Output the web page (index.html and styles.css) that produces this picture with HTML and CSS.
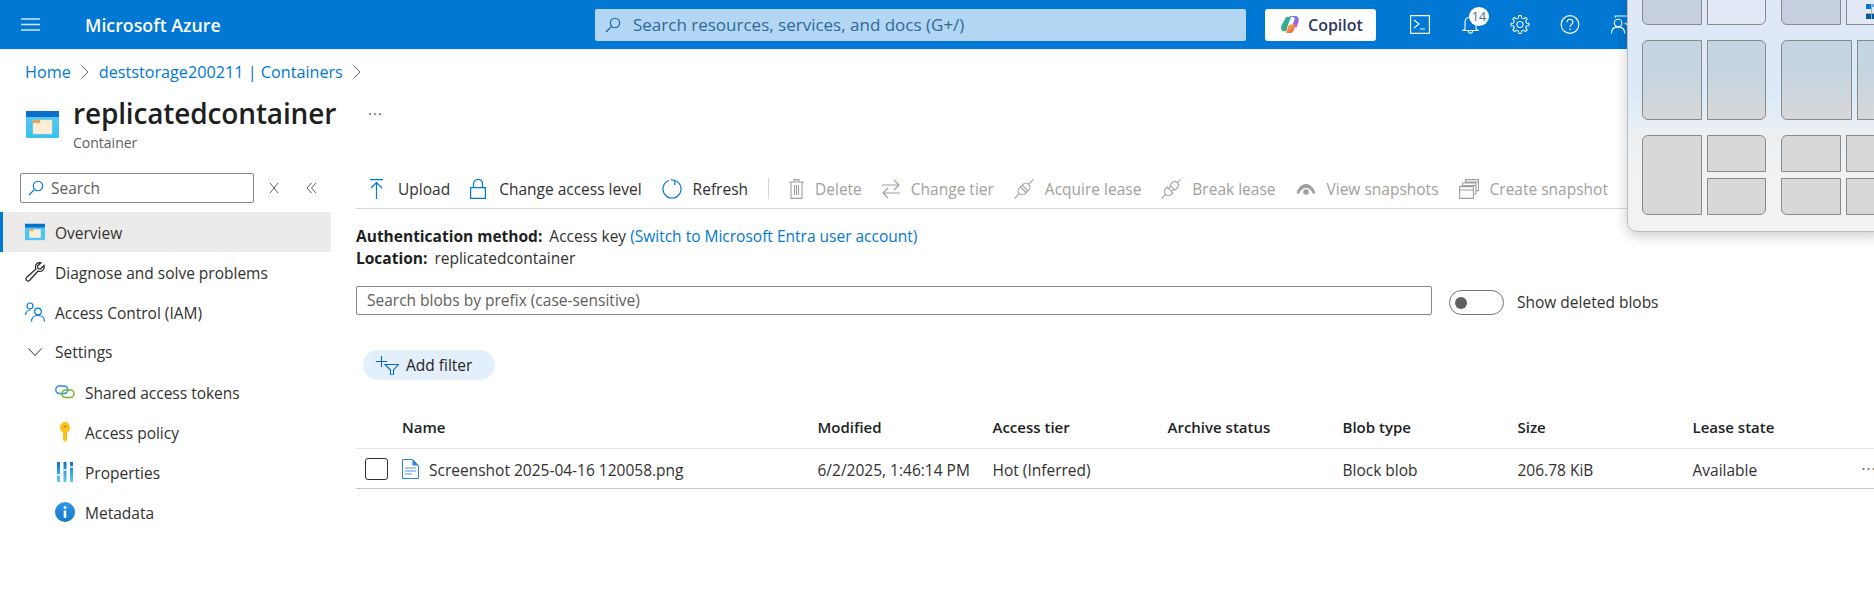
FILE: index.html
```html
<!DOCTYPE html>
<html lang="en">
<head>
<meta charset="utf-8">
<title>replicatedcontainer - Microsoft Azure</title>
<link rel="stylesheet" href="styles.css">
</head>
<body>
<header class="topbar">
  <svg class="hamburger" viewBox="0 0 19 13"><path d="M0 1h19M0 6.500h19M0 12h19" stroke="#cfe5f7" stroke-width="1.400" fill="none"/></svg>
  <div class="brand">Microsoft Azure</div>
  <div class="globalsearch">
    <svg class="ic16" viewBox="0 0 16 16"><circle cx="10" cy="6" r="4.700" fill="none" stroke="#1d5c92" stroke-width="1.100"/><path d="M6.600 9.400 1 15" stroke="#1d5c92" stroke-width="1.200"/></svg>
    <span>Search resources, services, and docs (G+/)</span>
  </div>
  <div class="copilot">
    <svg class="copilot-logo" viewBox="0 0 20 20"><defs><linearGradient id="cg1" x1="0" y1="0" x2="1" y2="1"><stop offset="0" stop-color="#1fb6c9"/><stop offset="1" stop-color="#4aa24f"/></linearGradient><linearGradient id="cg2" x1="0" y1="0" x2="1" y2="1"><stop offset="0" stop-color="#4a8cf0"/><stop offset="1" stop-color="#c74bd0"/></linearGradient><linearGradient id="cg3" x1="0" y1="0" x2="1" y2="1"><stop offset="0" stop-color="#f7b93c"/><stop offset="1" stop-color="#ef4f5c"/></linearGradient></defs><path d="M6 2h5L8 10 6 17H4C1 17 0 14 1 11z" fill="url(#cg1)"/><path d="M9 2c1-1 2-1 4-1h2c3 0 5 2 4 6l-2 6h-5l3-9c0-2-2-2-3-2z" fill="url(#cg2)"/><path d="M6 19l2-7c.500-1 1-2 3-2h5l-2 6c-1 2-2 3-4 3z" fill="url(#cg3)"/></svg>
    <span>Copilot</span>
  </div>
  <div class="topicons">
    <svg class="ti" viewBox="0 0 20 19"><path d="M.600.600h18.800v17.800H.600z" fill="none" stroke="#fff" stroke-width="1.100"/><path d="M4 5l5 4-5 4M10 14h5" fill="none" stroke="#fff" stroke-width="1.100"/></svg>
    <div class="bell">
      <svg class="bell-ic" viewBox="0 0 17 21"><path d="M3 15V8c0-3 2-5 5.500-5S14 5 14 8v7l2 1.500H1zM6.500 17c0 3 4 3 4 0" fill="none" stroke="#fff" stroke-width="1.100"/></svg>
      <span class="badge">14</span>
    </div>
    <svg class="ti" viewBox="0 0 20 20"><defs><path id="tooth" d="M-2.680-6.470-1.575-6.820-1.320-9.410 1.320-9.410 1.575-6.820 2.680-6.470" fill="none" stroke="#fff" stroke-width="1.100" stroke-linejoin="round"/></defs><g transform="translate(10 10)"><use href="#tooth"/><use href="#tooth" transform="rotate(45)"/><use href="#tooth" transform="rotate(90)"/><use href="#tooth" transform="rotate(135)"/><use href="#tooth" transform="rotate(180)"/><use href="#tooth" transform="rotate(225)"/><use href="#tooth" transform="rotate(270)"/><use href="#tooth" transform="rotate(315)"/><circle r="3.200" fill="none" stroke="#fff" stroke-width="1.100"/></g></svg>
    <svg class="ti" viewBox="0 0 20 20"><circle cx="10" cy="10" r="9.300" fill="none" stroke="#fff" stroke-width="1.200"/><path d="M7 7.500C7 5.500 8.500 4.500 10 4.500s3 1 3 3c0 2.500-3 2.500-3 5" fill="none" stroke="#fff" stroke-width="1.200"/><circle cx="10" cy="15" r=".900" fill="#fff"/></svg>
    <svg class="ti person" viewBox="0 0 20 20"><circle cx="8" cy="8.500" r="4" fill="none" stroke="#fff" stroke-width="1.200"/><path d="M1 19.500c0-5 3-7 7-7s7 2 7 7M5 3V1h14M15 8l2 2 2-2" fill="none" stroke="#fff" stroke-width="1.200"/></svg>
  </div>
</header>

<nav class="crumbs">
  <a>Home</a>
  <svg class="chev" viewBox="0 0 8 14"><path d="M1 1l6 6-6 6" fill="none" stroke="#605e5c"/></svg>
  <a>deststorage200211 | Containers</a>
  <svg class="chev" viewBox="0 0 8 14"><path d="M1 1l6 6-6 6" fill="none" stroke="#605e5c"/></svg>
</nav>

<section class="blade-head">
  <svg class="blade-icon" viewBox="0 0 33 27"><defs><linearGradient id="cb" x1="0" y1="0" x2="0" y2="1"><stop offset="0" stop-color="#5ec9f0"/><stop offset="1" stop-color="#35c2ee"/></linearGradient></defs><rect width="33" height="27" rx="1" fill="url(#cb)"/><rect width="33" height="6" fill="#0a6fcb"/><rect x="7" y="9" width="19" height="14" fill="#fbeed7" stroke="#e8d5b2" stroke-width=".500"/><rect x="7" y="9" width="7" height="3" fill="#f2a24a"/></svg>
  <div class="titles">
    <h1>replicatedcontainer</h1>
    <div class="subtitle">Container</div>
  </div>
  <div class="title-more">···</div>
</section>

<div class="blade-body">
  <aside class="side">
    <div class="side-tools">
      <div class="side-search">
        <svg class="ic16" viewBox="0 0 16 16"><circle cx="10" cy="6" r="4.700" fill="none" stroke="#0078d4" stroke-width="1.100"/><path d="M6.600 9.400 1 15" stroke="#0078d4" stroke-width="1.200"/></svg>
        <span>Search</span>
      </div>
      <svg class="tool-x" viewBox="0 0 10 12"><path d="M1 1l8 10M9 1 1 11" stroke="#605e5c" fill="none"/></svg>
      <svg class="tool-dbl" viewBox="0 0 11 12"><path d="M5.500 1 1 6l4.500 5M10 1 5.500 6l4.500 5" stroke="#605e5c" fill="none"/></svg>
    </div>
    <ul class="menu">
      <li class="row active">
        <svg class="mi" viewBox="0 0 33 27"><rect width="33" height="27" fill="#4cc6f0"/><rect width="33" height="6" fill="#0a6fcb"/><rect x="7" y="9" width="19" height="14" fill="#fbeed7"/><rect x="7" y="9" width="7" height="3" fill="#f2a24a"/></svg>
        <span>Overview</span>
      </li>
      <li class="row">
        <svg class="mi" viewBox="0 0 20 20"><path d="M19 3.500l-3.500 3.500-2.500-.500-.500-2.500L16 .800C13 0 10 2 10.500 5.500c.100.700.300 1.200.500 1.500L1.500 15.500c-1.500 2 1 4.500 3 3L13 9c3 1.500 7-1 6-5.500z" fill="none" stroke="#252423" stroke-width="1.200"/></svg>
        <span>Diagnose and solve problems</span>
      </li>
      <li class="row">
        <svg class="mi" viewBox="0 0 20 20"><circle cx="5" cy="4" r="3" fill="none" stroke="#0078d4" stroke-width="1.200"/><circle cx="13" cy="9.500" r="3.300" fill="none" stroke="#0078d4" stroke-width="1.200"/><path d="M.700 13c0-3 2-5 4.500-5M6.500 19.500c0-4 3-6 6.500-6s6.500 2 6.500 6" fill="none" stroke="#0078d4" stroke-width="1.200"/></svg>
        <span>Access Control (IAM)</span>
      </li>
      <li class="row settings">
        <svg class="mi-chev" viewBox="0 0 14 8"><path d="M.500.500 7 7.500 13.500.500" fill="none" stroke="#323130"/></svg>
        <span>Settings</span>
      </li>
      <li class="row sub">
        <svg class="mi" viewBox="0 0 20 14"><rect x=".800" y="1" width="12" height="7.500" rx="3.700" fill="none" stroke="#2f8fdc" stroke-width="1.500"/><rect x="7" y="5" width="12" height="7.500" rx="3.700" fill="none" stroke="#76b82a" stroke-width="1.500"/></svg>
        <span>Shared access tokens</span>
      </li>
      <li class="row sub">
        <svg class="mi" viewBox="0 0 20 20"><path d="M10 0c3 0 5 2.500 5 5.500S13 10 12 10.500V18l-2 2-2-2V10.500C7 10 5 8.500 5 5.500S7 0 10 0z" fill="#fcc419"/><path d="M8.500 4.500h3" stroke="#a87400" stroke-width="1.200"/><path d="M12 12h-1.500M12 15h-1.500" stroke="#e8a200"/></svg>
        <span>Access policy</span>
      </li>
      <li class="row sub">
        <svg class="mi" viewBox="0 0 20 20"><defs><linearGradient id="pg" x1="0" y1="0" x2="0" y2="1"><stop offset="0" stop-color="#0a6fcb"/><stop offset="1" stop-color="#5ed4f2"/></linearGradient></defs><path d="M2 0h3v20H2zM8.500 0h3v20h-3zM15 0h3v20h-3z" fill="url(#pg)"/><path d="M2 13h3M8.500 8h3M15 5h3" stroke="#fff" stroke-width="1.300"/></svg>
        <span>Properties</span>
      </li>
      <li class="row sub">
        <svg class="mi" viewBox="0 0 20 20"><defs><linearGradient id="ig" x1="0" y1="0" x2="0" y2="1"><stop offset="0" stop-color="#2d97e8"/><stop offset="1" stop-color="#1478c8"/></linearGradient></defs><circle cx="10" cy="10" r="10" fill="url(#ig)"/><circle cx="10" cy="5.500" r="1.500" fill="#fff"/><path d="M8.700 8.500h2.600v7.500H8.700z" fill="#fff"/></svg>
        <span>Metadata</span>
      </li>
    </ul>
  </aside>

  <main class="main">
    <div class="toolbar">
      <div class="tool"><svg class="ti-u" viewBox="0 0 13 20"><path d="M0 .600h13M6.500 20V4M1 9l5.500-5.500L12 9" fill="none" stroke="#0078d4" stroke-width="1.200"/></svg><span>Upload</span></div>
      <div class="tool"><svg class="ti-l" viewBox="0 0 16 20"><path d="M.600 8.600h14.800v10.800H.600zM3.500 8.500V5c0-6 9-6 9 0v3.500" fill="none" stroke="#0078d4" stroke-width="1.200"/></svg><span>Change access level</span></div>
      <div class="tool"><svg class="ti-i" viewBox="0 0 20 20"><path d="M7 1.500a9 9 0 1 0 6 0M12.800 1.500V6M13 1.500 8.800 .600" fill="none" stroke="#0078d4" stroke-width="1.200"/></svg><span>Refresh</span></div>
      <div class="tool-sep"></div>
      <div class="tool off"><svg class="ti-d" viewBox="0 0 15 20"><path d="M0 3h15M5 3V.600h5V3M2 3v16.400h11V3M5.500 6v10M7.500 6v10M9.500 6v10" fill="none" stroke="#a19f9d" stroke-width="1.100"/></svg><span>Delete</span></div>
      <div class="tool off"><svg class="ti-t" viewBox="0 0 18 20"><path d="M0 6h17M12 1l5 5-5 5M18 14H1M6 9l-5 5 5 5" fill="none" stroke="#a19f9d" stroke-width="1.100"/></svg><span>Change tier</span></div>
      <div class="tool off"><svg class="ti-i" viewBox="0 0 20 20"><g transform="rotate(45 10 10)" fill="none" stroke="#a19f9d" stroke-width="1.100"><rect x="6" y="3.500" width="8" height="13" rx="4"/><path d="M6 8.500h8M6 11h8M10 3.500V-3.500M10 16.500v7"/></g></svg><span>Acquire lease</span></div>
      <div class="tool off"><svg class="ti-i" viewBox="0 0 20 20"><g transform="rotate(45 10 10)" fill="none" stroke="#a19f9d" stroke-width="1.100"><path d="M6.500 4.500a3.500 3.500 0 0 1 7 0v3.500h-7zM6 11.500h8v2a4 4 0 0 1-8 0zM10 1V-3.500M10 17.500v6M8 8v3.500M12 8v3.500"/></g></svg><span>Break lease</span></div>
      <div class="tool off"><svg class="ti-v" viewBox="0 0 20 12"><path d="M.500 10C3 3 7 1 10 1s7 2 9.500 9l-2.500 1C15 6 12.500 5 10 5S5 6 3 11z" fill="#a19f9d"/><circle cx="10" cy="9" r="2.800" fill="#a19f9d"/></svg><span>View snapshots</span></div>
      <div class="tool off"><svg class="ti-i" viewBox="0 0 20 20"><path d="M.600 7.600h13.800v11.800H.600zM.600 11h13.800M3.500 7.500v-3.500h13.500v11h-2.500M3.500 6.500H17M6.500 4V.600h13v11h-2.500M6.500 3H19.500" fill="none" stroke="#a19f9d" stroke-width="1.100"/></svg><span>Create snapshot</span></div>
      <div class="tool"><svg class="ti-i" viewBox="0 0 20 20"><circle cx="8" cy="8" r="4" fill="none" stroke="#0078d4" stroke-width="1.200"/><path d="M1 19c0-5 3-7 7-7s7 2 7 7" fill="none" stroke="#0078d4" stroke-width="1.200"/></svg></div>
    </div>

    <div class="info">
      <div><b>Authentication method:</b> Access key <a>(Switch to Microsoft Entra user account)</a></div>
      <div><b>Location:</b> replicatedcontainer</div>
    </div>

    <div class="filter-row">
      <div class="prefix">Search blobs by prefix (case-sensitive)</div>
      <div class="toggle"><i></i></div>
      <span class="toggle-label">Show deleted blobs</span>
    </div>

    <div class="pill">
      <svg class="pill-ic" viewBox="0 0 23 19"><path d="M5.500 0v11M0 5.500h11" stroke="#0a63d8" stroke-width="1.100" fill="none"/><path d="M9 8.500h13.500l-5 5.500v5h-3v-5z" fill="none" stroke="#0a63d8" stroke-width="1.100"/></svg>
      <span>Add filter</span>
    </div>

    <div class="table">
      <div class="thead">
        <div class="cell">Name</div>
        <div class="cell">Modified</div>
        <div class="cell">Access tier</div>
        <div class="cell">Archive status</div>
        <div class="cell">Blob type</div>
        <div class="cell">Size</div>
        <div class="cell">Lease state</div>
      </div>
      <div class="tbody">
        <div class="check"></div>
        <div class="cell namecell">
          <svg class="file" viewBox="0 0 17 20"><path d="M.500.500h10l6 6v13H.500z" fill="#fff" stroke="#2c83dc"/><path d="M10.500.500v6h6z" fill="#2c83dc"/><path d="M3 9h11M3 12h11M3 15h7" stroke="#8ab9ec" stroke-width="1.300"/></svg>
          <span>Screenshot 2025-04-16 120058.png</span>
        </div>
        <div class="cell">6/2/2025, 1:46:14 PM</div>
        <div class="cell">Hot (Inferred)</div>
        <div class="cell"></div>
        <div class="cell">Block blob</div>
        <div class="cell">206.78 KiB</div>
        <div class="cell">Available</div>
        <div class="row-more">···</div>
      </div>
    </div>
  </main>
</div>

<div class="snap">
  <div class="snap-group">
    <div class="snap-row r-top"><div class="s w60 bl dark"></div><div class="s w59 br light"></div></div>
    <div class="snap-row r-mid"><div class="s w60 tl bl mid"></div><div class="s w59 tr br mid"></div></div>
    <div class="snap-row r-low"><div class="s w60 tl bl low"></div><div class="split w59"><div class="s tr low"></div><div class="s br low"></div></div></div>
  </div>
  <div class="snap-group">
    <div class="snap-row r-top"><div class="s w60 bl dark"></div><div class="s w60 light"><svg class="mini" viewBox="0 0 11 15"><rect width="6" height="5" fill="#0078d4"/><rect x="6" width="5" height="3" fill="#5aa9ef"/><rect y="10" width="5" height="5" fill="#005a9e"/><rect x="6" y="10" width="5" height="5" fill="#005a9e"/><path d="M0 9.500h11M5.500 0v15" stroke="#aaa"/></svg></div></div>
    <div class="snap-row r-mid"><div class="s w71 tl bl mid"></div><div class="s w60 mid"></div></div>
    <div class="snap-row r-low"><div class="split w60"><div class="s tl low"></div><div class="s bl low"></div></div><div class="split w60"><div class="s low"></div><div class="s low"></div></div></div>
  </div>
</div>
</body>
</html>
```

FILE: styles.css
```css
* { box-sizing: border-box; }
html, body { margin: 0; padding: 0; }
body {
  width: 1874px; height: 599px; overflow: hidden; background: #fff;
  font-family: "Open Sans", "Noto Sans", sans-serif;
  font-size: 15.500px; color: #323130; position: relative;
}
svg { display: block; flex: none; }
a { color: #0078d4; }
b { font-weight: 700; color: #201f1e; margin-right: 3px; }
ul { list-style: none; margin: 0; padding: 0; }

.topbar { height: 49px; background: #0078d4; display: flex; align-items: center; padding-left: 21px; color: #fff; }
.hamburger { width: 19px; height: 13px; }
.brand { margin-left: 45px; width: 510px; font-size: 17.800px; font-weight: 600; white-space: nowrap; }
.globalsearch { width: 651px; height: 32px; background: #b3d7f2; border-radius: 2px; display: flex; align-items: center; gap: 12px; padding-left: 10px; color: #2f689b; font-size: 17px; white-space: nowrap; }
.ic16 { width: 16px; height: 16px; }
.copilot { margin-left: 19px; width: 111px; height: 32px; background: #fff; border-radius: 3px; display: flex; align-items: center; gap: 8px; padding-left: 15px; color: #2b3a5a; font-weight: 600; font-size: 16px; }
.copilot-logo { width: 20px; height: 19px; }
.topicons { display: flex; align-items: center; margin-left: 34px; gap: 30px; }
.ti { width: 20px; height: 19px; }
.bell { position: relative; width: 20px; height: 21px; padding-left: 2px; }
.bell-ic { width: 17px; height: 21px; }
.badge { position: absolute; left: 9px; top: -7px; width: 20px; height: 19px; border-radius: 50%; background: #fff; color: #4a6f94; font-size: 12.500px; text-align: center; line-height: 19px; }

.crumbs { height: 46px; display: flex; align-items: center; padding-left: 25px; gap: 10px; font-size: 16.200px; }
.chev { width: 8px; height: 14px; }

.blade-head { height: 63px; display: flex; padding-left: 26px; }
.blade-icon { width: 33px; height: 27px; margin-top: 16px; }
.titles { margin-left: 14px; }
h1 { margin: 0; font-size: 28px; font-weight: 600; line-height: 36px; color: #201f1e; letter-spacing: -.150px; }
.subtitle { font-size: 14px; color: #605e5c; line-height: 18px; margin-top: 3px; }
.title-more { margin-left: 32px; margin-top: 8px; font-size: 15px; letter-spacing: 1px; color: #605e5c; line-height: 20px; }

.blade-body { display: flex; }
.side { width: 356px; flex: none; padding-top: 15px; }
.side-tools { display: flex; align-items: center; padding-left: 20px; height: 30px; }
.side-search { width: 234px; height: 30px; border: 1px solid #8a8886; border-radius: 2px; display: flex; align-items: center; gap: 7px; padding-left: 7px; color: #605e5c; }
.tool-x { width: 10px; height: 12px; margin-left: 15px; }
.tool-dbl { width: 11px; height: 12px; margin-left: 27px; }
.menu { margin-top: 9px; width: 331px; }
.row { height: 40px; display: flex; align-items: center; padding-left: 25px; gap: 10px; }
.row span { padding-top: 2px; }
.row.settings span { padding-top: 0; padding-bottom: 1px; }
.row.active { background: #edebe9; box-shadow: inset 3px 0 0 #0078d4; }
.row.sub { padding-left: 55px; }
.mi { width: 20px; height: 20px; }
.mi-chev { width: 14px; height: 8px; margin-left: 3px; margin-right: 3px; }

.main { flex: 1; min-width: 0; }
.toolbar { height: 36px; border-bottom: 1px solid #d6d6d6; display: flex; align-items: flex-start; padding: 5px 0 0 14px; margin-top: 15px; gap: 20px; white-space: nowrap; overflow: hidden; }
.tool { display: flex; align-items: center; gap: 11px; height: 21px; flex: none; }
.tool.off { color: #a19f9d; }
.tool-sep { width: 1px; height: 21px; background: #d6d6d6; flex: none; }
.ti-u { width: 13px; height: 20px; margin-right: 4px; }
.ti-l { width: 16px; height: 20px; margin-right: 2px; }
.ti-i { width: 20px; height: 20px; }
.ti-d { width: 15px; height: 20px; }
.ti-t { width: 18px; height: 20px; }
.ti-v { width: 20px; height: 12px; }

.info { margin-top: 16px; line-height: 22px; white-space: nowrap; }
.filter-row { margin-top: 16px; display: flex; align-items: center; height: 30px; }
.prefix { width: 1076px; height: 29px; border: 1px solid #8a8886; border-radius: 2px; display: flex; align-items: center; padding-left: 10px; color: #605e5c; }
.toggle { width: 55px; height: 25px; margin-left: 17px; border: 1px solid #757575; border-radius: 13px; position: relative; margin-top: 4px; }
.toggle i { position: absolute; left: 5px; top: 6px; width: 12px; height: 12px; border-radius: 50%; background: #605e5c; }
.toggle-label { margin-left: 13px; margin-top: 4px; white-space: nowrap; }
.pill { margin-top: 35px; margin-left: 7px; width: 132px; height: 30px; border-radius: 15px; background: #e3f0fb; display: flex; align-items: center; padding-left: 13px; gap: 7px; color: #252423; }
.pill-ic { width: 23px; height: 19px; }

.table { margin-top: 29px; }
.thead, .tbody { display: grid; align-items: center; }
.thead { height: 40px; border-bottom: 1px solid #e6e6e6; font-weight: 600; font-size: 15px; color: #201f1e; grid-template-columns: 415.500px repeat(6, 175px); padding: 0 0 4px 46px; }
.tbody { height: 40px; border-bottom: 1px solid #c8c6c4; grid-template-columns: 46px 415.500px repeat(5, 175px) 169px 1fr; }
.tbody .cell { padding-top: 2px; }
.check { width: 23px; height: 22px; margin-left: 9px; border: 1px solid #323130; border-radius: 3px; }
.cell { white-space: nowrap; }
.namecell { display: flex; align-items: center; gap: 10px; }
.file { width: 17px; height: 20px; margin-top: -2px; }
.row-more { color: #605e5c; letter-spacing: 1px; white-space: nowrap; }

.snap { position: absolute; left: 1627px; top: -40px; width: 260px; height: 272px; border: 1px solid #bdbdbd; border-radius: 10px; background: linear-gradient(#e6e9f7 0, #dfe8f8 50px, #dceaf8 130px, #ecf0f3 175px, #f2f2f2 230px); box-shadow: 0 4px 14px rgba(0,0,0,.2); display: flex; padding-left: 14px; gap: 15px; }
.snap-group { flex: none; display: flex; flex-direction: column; gap: 15px; }
.snap-row { display: flex; gap: 5px; }
.r-top { height: 64px; }
.r-mid, .r-low { height: 80px; }
.s { border: 1px solid #8a8a8a; position: relative; }
.split { display: flex; flex-direction: column; gap: 6px; }
.split .s { height: 37px; }
.w59 { width: 59px; }
.w60 { width: 60px; }
.w71 { width: 71px; }
.dark { background: #c5cfe0; }
.light { background: #e3e8f7; }
.mid { background: linear-gradient(#c5d4e1 35%, #d6d8da); }
.low { background: #d8d8d8; }
.tl { border-top-left-radius: 6px; }
.tr { border-top-right-radius: 6px; }
.bl { border-bottom-left-radius: 6px; }
.br { border-bottom-right-radius: 6px; }
.mini { position: absolute; right: 28px; top: 42px; width: 11px; height: 15px; }
```
